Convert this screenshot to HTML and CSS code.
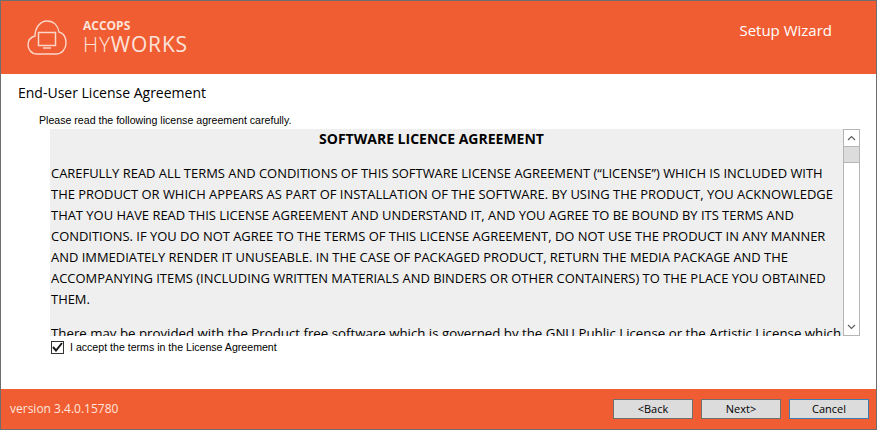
FILE: index.html
```html
<!DOCTYPE html>
<html lang="en">
<head>
<meta charset="utf-8">
<title>Setup Wizard</title>
<link rel="stylesheet" href="styles.css">
</head>
<body>
<div class="window">
  <header class="header">
    <div class="brand">
      <svg class="logo" width="40" height="36" viewBox="0 0 40 36" fill="none" stroke="#fbd5c8">
        <path d="M10 34 C4 34 1 29 1 25 C1 20 4 17 8 16 C8 8 13 1 20 1 C27 1 31 6 32 12 C36 13 39 17 39 23 C39 29 35 34 29 34 Z" stroke-width="1.4"/>
        <rect x="11.5" y="12.5" width="17" height="13" stroke-width="1.5"/>
        <path d="M16 28 H24" stroke-width="1.5"/>
      </svg>
      <div class="brand-text">
        <div class="brand-top">ACCOPS</div>
        <div class="brand-name"><span class="thin">HY</span>WORKS</div>
      </div>
    </div>
    <div class="wizard-title">Setup Wizard</div>
  </header>
  <main class="content">
    <h1 class="title">End-User License Agreement</h1>
    <p class="prompt">Please read the following license agreement carefully.</p>
    <div class="license-row">
      <div class="license">
        <h2 class="license-head">SOFTWARE LICENCE AGREEMENT</h2>
        <p class="license-p">CAREFULLY READ ALL TERMS AND CONDITIONS OF THIS SOFTWARE LICENSE AGREEMENT (“LICENSE”) WHICH IS INCLUDED WITH<br>THE PRODUCT OR WHICH APPEARS AS PART OF INSTALLATION OF THE SOFTWARE. BY USING THE PRODUCT, YOU ACKNOWLEDGE<br>THAT YOU HAVE READ THIS LICENSE AGREEMENT AND UNDERSTAND IT, AND YOU AGREE TO BE BOUND BY ITS TERMS AND<br>CONDITIONS. IF YOU DO NOT AGREE TO THE TERMS OF THIS LICENSE AGREEMENT, DO NOT USE THE PRODUCT IN ANY MANNER<br>AND IMMEDIATELY RENDER IT UNUSEABLE. IN THE CASE OF PACKAGED PRODUCT, RETURN THE MEDIA PACKAGE AND THE<br>ACCOMPANYING ITEMS (INCLUDING WRITTEN MATERIALS AND BINDERS OR OTHER CONTAINERS) TO THE PLACE YOU OBTAINED<br>THEM.</p>
        <p class="license-p license-next">There may be provided with the Product free software which is governed by the GNU Public License or the Artistic License which</p>
      </div>
      <div class="scrollbar">
        <div class="scroll-btn"><svg width="9" height="6" viewBox="0 0 9 6" fill="none" stroke="#606060"><path d="M1 5 L4.5 1.5 L8 5" stroke-width="1.2"/></svg></div>
        <div class="scroll-thumb"></div>
        <div class="scroll-track"></div>
        <div class="scroll-btn"><svg width="9" height="6" viewBox="0 0 9 6" fill="none" stroke="#606060"><path d="M1 1 L4.5 4.5 L8 1" stroke-width="1.2"/></svg></div>
      </div>
    </div>
    <label class="accept">
      <span class="checkbox"><svg width="11" height="10" viewBox="0 0 11 10" fill="none" stroke="#1a1a1a"><path d="M1 5 L4 8.5 L10 1" stroke-width="2"/></svg></span>
      <span>I accept the terms in the License Agreement</span>
    </label>
  </main>
  <footer class="footer">
    <div class="version">version 3.4.0.15780</div>
    <div class="buttons">
      <div class="btn">&lt;Back</div>
      <div class="btn">Next&gt;</div>
      <div class="btn btn-cancel">Cancel</div>
    </div>
  </footer>
</div>
</body>
</html>
```
FILE: styles.css
```css
* { box-sizing: border-box; }
html, body { margin: 0; padding: 0; }
body { width: 877px; height: 430px; overflow: hidden; font-family: "Open Sans", sans-serif; background: #fff; }
.window { width: 877px; height: 430px; border: 1px solid #6e6e6e; display: flex; flex-direction: column; }
.header { height: 73px; background: #f15d33; display: flex; align-items: center; justify-content: space-between; padding: 0 44px 0 26px; flex: none; }
.brand { display: flex; align-items: center; gap: 16px; }
.logo { display: block; }
.brand-text { color: #fce3da; padding-bottom: 1px; }
.brand-top { font-size: 12px; font-weight: 700; line-height: 13px; }
.brand-name { font-size: 21px; line-height: 24px; letter-spacing: 0.8px; font-weight: 400; }
.thin { font-weight: 300; }
.wizard-title { color: #fff; font-size: 15px; line-height: 20px; padding-bottom: 16px; }
.content { flex: 1; min-height: 0; padding: 9px 16px 0 17px; color: #000; }
.title { margin: 0; font-size: 14px; font-weight: 400; line-height: 20px; }
.prompt { margin: 10px 0 0 21px; font-family: "Liberation Sans", sans-serif; font-size: 10.6px; line-height: 14px; }
.license-row { display: flex; margin: 2px 0 0 32px; height: 207px; }
.license { width: 794px; height: 207px; overflow: hidden; background: #efefef; padding: 0 1px; font-size: 12.94px; line-height: 21px; }
.license-head { margin: -1px 30px 0 0; font-size: 14px; font-weight: 700; text-align: center; line-height: 21px; }
.license-p { margin: 14px 0 0; white-space: nowrap; }
.license-next { font-size: 13.28px; margin-top: 13px; }
.scrollbar { width: 17px; height: 207px; border: 1px solid #b5b5b5; background: #fff; display: flex; flex-direction: column; }
.scroll-btn { height: 16px; display: flex; align-items: center; justify-content: center; flex: none; }
.scroll-thumb { height: 17px; background: #dcdcdc; border-top: 1px solid #b5b5b5; border-bottom: 1px solid #b5b5b5; flex: none; }
.scroll-track { flex: 1; }
.accept { display: flex; align-items: center; gap: 6px; margin: 4px 0 0 33px; font-family: "Liberation Sans", sans-serif; font-size: 10.6px; line-height: 14px; }
.checkbox { width: 13px; height: 13px; border: 1px solid #333; background: #fff; display: flex; align-items: center; justify-content: center; }
.footer { height: 40px; background: #f15d33; display: flex; align-items: center; justify-content: space-between; padding: 0 7px 0 9px; flex: none; }
.version { color: #fde5dc; font-size: 12px; line-height: 16px; }
.buttons { display: flex; gap: 8px; }
.btn { width: 80px; height: 20px; background: #dcdcdc; border: 1px solid #6f6f6f; font-size: 11px; line-height: 18px; text-align: center; color: #000; }
.btn-cancel { border-color: #3f7cb0; }
```
